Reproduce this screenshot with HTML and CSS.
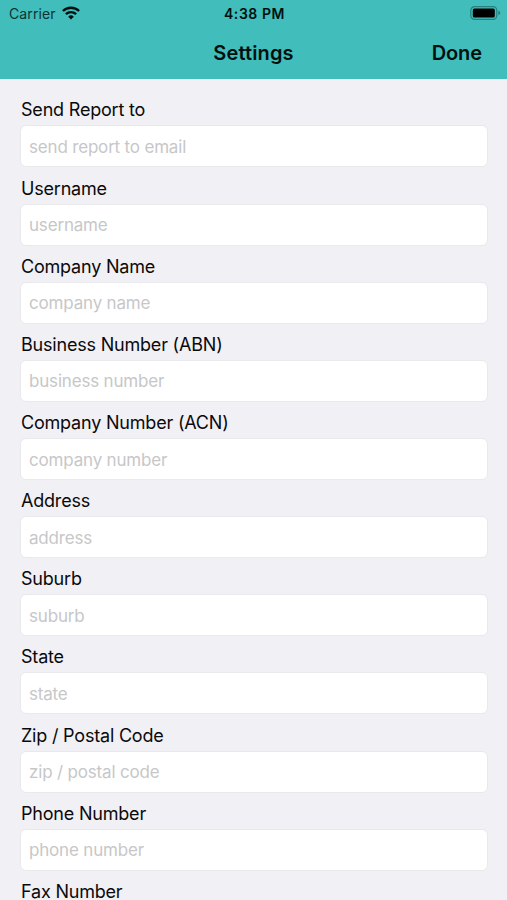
FILE: index.html
```html
<!DOCTYPE html>
<html lang="en">
<head>
<meta charset="utf-8">
<title>Settings</title>
<link rel="stylesheet" href="styles.css">
</head>
<body>
<header class="top">
  <div class="status">
    <div class="carrier"><span class="carrier-name">Carrier</span>
      <svg class="wifi" width="18" height="14" viewBox="0 0 18 14"><path d="M9 13.6 6.2 10.7a4 4 0 0 1 5.6 0z" fill="#001010"/><path d="M3.9 8.2a7.4 7.4 0 0 1 10.2 0M.9 5a11.8 11.8 0 0 1 16.2 0" fill="none" stroke="#001010" stroke-width="2.4"/></svg>
    </div>
    <div class="time">4:38 PM</div>
    <svg class="battery" width="31" height="14" viewBox="0 0 31 14"><rect x=".8" y=".6" width="26" height="12.8" rx="3.8" fill="none" stroke="#26817f" stroke-width="1.2"/><rect x="2.8" y="2.5" width="22" height="9" rx="1.6" fill="#000"/><path d="M28.3 4.8q2 .6 2 2.2t-2 2.2z" fill="#26817f"/></svg>
  </div>
  <nav class="bar"><h1 class="title">Settings</h1><span class="done">Done</span></nav>
</header>
<main class="form">
  <label class="field"><span class="label">Send Report to</span><input class="input" placeholder="send report to email"></label>
  <label class="field"><span class="label">Username</span><input class="input" placeholder="username"></label>
  <label class="field"><span class="label">Company Name</span><input class="input" placeholder="company name"></label>
  <label class="field"><span class="label">Business Number (ABN)</span><input class="input" placeholder="business number"></label>
  <label class="field"><span class="label">Company Number (ACN)</span><input class="input" placeholder="company number"></label>
  <label class="field"><span class="label">Address</span><input class="input" placeholder="address"></label>
  <label class="field"><span class="label">Suburb</span><input class="input" placeholder="suburb"></label>
  <label class="field"><span class="label">State</span><input class="input" placeholder="state"></label>
  <label class="field"><span class="label">Zip / Postal Code</span><input class="input" placeholder="zip / postal code"></label>
  <label class="field"><span class="label">Phone Number</span><input class="input" placeholder="phone number"></label>
  <div class="field field-last"><span class="label">Fax Number</span></div>
</main>
</body>
</html>
```

FILE: styles.css
```css
* { box-sizing: border-box; }
html, body { margin: 0; height: 900px; overflow: hidden; }
body { background: #f1f0f5; color: #000; font-family: Inter, sans-serif; }
.top { height: 79px; background: #41bdbb; color: #001010; }
.status { height: 27px; padding: 0 6px 0 9px; display: grid; grid-template-columns: 1fr auto 1fr; align-items: center; font-size: 14px; }
.carrier { display: flex; align-items: center; gap: 6px; letter-spacing: .12px; }
.carrier-name { color: #0c3433; }
.wifi { margin-top: -2px; }
.time { font-weight: 600; letter-spacing: .55px; padding-right: 1px; }
.battery { justify-self: end; margin-top: -1px; }
.bar { height: 51px; display: grid; grid-template-columns: 1fr auto 1fr; align-items: center; padding: 0 25px; font-size: 20px; font-weight: 600; }
.title { grid-column: 2; margin: 0; font: inherit; letter-spacing: .12px; }
.done { justify-self: end; letter-spacing: -.1px; }
.form { height: 821px; padding: 20.4px 19px 0 20px; overflow: hidden; }
.field { display: block; height: 78.17px; }
.label { display: block; height: 26px; line-height: 22px; font-size: 18px; letter-spacing: -.2px; padding-left: 1px; color: #0a0a0b; }
.input { display: block; width: 100%; height: 42px; border: 1px solid #e9e9ed; border-radius: 6px; background: #fff; padding: 1px 8px 0; font: 17px Inter, sans-serif; letter-spacing: -.18px; outline: none; }
.input::placeholder { color: #c7c7c8; opacity: 1; }
.field-last { height: 18px; padding-top: 2px; }
.field-last .label { height: 17px; line-height: 17px; }
```
